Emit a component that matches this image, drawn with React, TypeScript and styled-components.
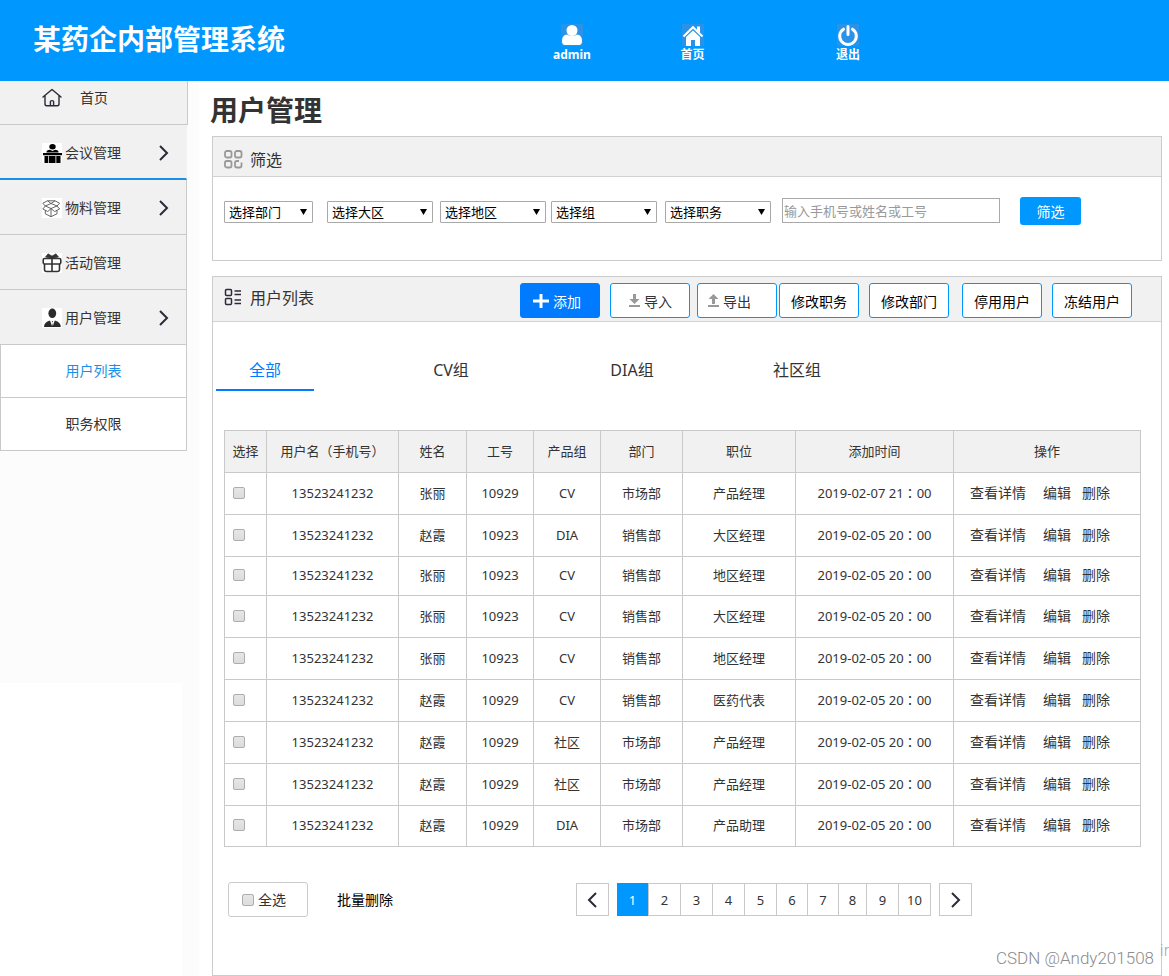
import React from 'react';
import styled, { createGlobalStyle, css } from 'styled-components';

const cjk = '"Noto Sans", "Noto Sans CJK SC", sans-serif';

const GlobalStyle = createGlobalStyle`
  * { box-sizing: border-box; }
  body { margin: 0; background: #fff; color: #333; font: 14px/20px ${cjk}; }
  button, input, select { font-family: inherit; }
  a { color: inherit; text-decoration: none; }
  svg { display: block; flex: none; }
`;

const Page = styled.div`
  position: relative;
  overflow-x: hidden;
`;

/* ---------- top bar ---------- */
const Header = styled.header`
  display: flex;
  height: 81px;
  background: #0097ff;
  color: #fff;
`;
const Brand = styled.div`
  width: 502px;
  padding: 18px 0 0 33px;
  font-size: 28px;
  line-height: 42px;
  font-weight: 700;
`;
const HeaderLink = styled.a<{ $width: number }>`
  display: flex;
  flex-direction: column;
  align-items: center;
  width: ${(p) => p.$width}px;
  padding-top: 24px;
  font-size: 12px;
  line-height: 18px;
  font-weight: 700;
`;
const HeaderIcon = styled.span`
  width: 22px;
  height: 22px;
  background: #2a93e8;
`;

/* ---------- side menu ---------- */
const Body = styled.div`
  display: flex;
`;
const Aside = styled.aside`
  flex: none;
  width: 199px;
  background: linear-gradient(#fff, #fff) 0 602px / 182px 100% no-repeat #fcfcfc;
`;
const MenuItem = styled.a<{ $first?: boolean; $active?: boolean }>`
  display: flex;
  align-items: center;
  width: 187px;
  height: 55px;
  padding: 2px 16px 0 42px;
  background: #f1f1f1;
  border-right: 1px solid #c9c9c9;
  border-bottom: 1px solid #c9c9c9;
  ${(p) => p.$first && css`
    width: 188px;
    height: 44px;
    padding-top: 0;
    padding-bottom: 10px;
  `}
  ${(p) => p.$active && css`
    border-right-color: #f1f1f1;
    border-bottom: 2px solid #1b8fe6;
  `}
`;
const MenuIcon = styled.span<{ $plain?: boolean }>`
  width: 20px;
  height: 20px;
  margin-right: ${(p) => (p.$plain ? 18 : 3)}px;
  background: ${(p) => (p.$plain ? 'none' : '#fff')};
`;
const MenuLabel = styled.span`
  flex: 1;
`;
const SubItem = styled.a<{ $active?: boolean }>`
  display: flex;
  align-items: center;
  justify-content: center;
  width: 187px;
  height: 53px;
  background: #fff;
  border: 1px solid #c9c9c9;
  border-top: 0;
  color: ${(p) => (p.$active ? '#1b8fe6' : '#333')};
`;

/* ---------- panels ---------- */
const Main = styled.main`
  flex: 1;
  min-width: 0;
  padding: 8px 7px 0 13px;
`;
const Title = styled.h1`
  margin: 0 0 5px -2px;
  font-size: 28px;
  line-height: 42px;
  font-weight: 700;
`;
const Panel = styled.section`
  margin-bottom: 15px;
  border: 1px solid #ccc;
  &:last-child { margin-bottom: 0; }
`;
const PanelHead = styled.div<{ $tall?: boolean }>`
  display: flex;
  align-items: center;
  height: ${(p) => (p.$tall ? 45 : 40)}px;
  padding: ${(p) => (p.$tall ? '3px 29px 0 11px' : '6px 29px 0 11px')};
  background: #f1f1f1;
  border-bottom: 1px solid #d2d2d2;
`;
const PanelTitle = styled.h2<{ $raised?: boolean }>`
  display: flex;
  flex: 1;
  align-items: center;
  gap: 7px;
  margin: 0;
  padding-bottom: ${(p) => (p.$raised ? 6 : 0)}px;
  font-size: 16px;
  line-height: 24px;
  font-weight: 400;
`;

/* ---------- filter form ---------- */
const Filters = styled.form`
  display: flex;
  align-items: flex-end;
  height: 83px;
  padding: 0 0 37px 11px;
`;
const SelectBox = styled.div<{ $width: number; $gap: number }>`
  position: relative;
  width: ${(p) => p.$width}px;
  height: 22px;
  margin-left: ${(p) => p.$gap}px;
`;
const Select = styled.select`
  appearance: none;
  width: 100%;
  height: 22px;
  padding: 0 4px;
  border: 1px solid #a9a9a9;
  border-radius: 1px;
  background: #fff;
  color: #000;
  font-size: 13px;
  line-height: 20px;
`;
const SelectArrow = styled.svg`
  position: absolute;
  right: 6px;
  top: 8px;
  pointer-events: none;
`;
const Search = styled.input`
  width: 218px;
  height: 25px;
  margin-left: 11px;
  padding: 0 1px;
  border: 1px solid #a9a9a9;
  font-size: 13px;
  &::placeholder { color: #999; opacity: 1; }
`;
const Submit = styled.button`
  width: 61px;
  height: 28px;
  margin: 0 0 -2px 20px;
  padding: 0;
  border: 0;
  border-radius: 3px;
  background: #0097ff;
  color: #fff;
  font-size: 14px;
`;

/* ---------- toolbar ---------- */
const ToolButton = styled.button<{ $gap: number; $pad?: number; $primary?: boolean }>`
  display: flex;
  align-items: center;
  justify-content: ${(p) => (p.$pad ? 'flex-start' : 'center')};
  gap: 4px;
  width: 80px;
  height: 35px;
  margin-left: ${(p) => p.$gap}px;
  padding: 0 0 0 ${(p) => p.$pad ?? 0}px;
  border: 1px solid ${(p) => (p.$primary ? '#007aff' : '#0097ff')};
  border-radius: 3px;
  background: ${(p) => (p.$primary ? '#007aff' : '#fff')};
  color: ${(p) => (p.$primary ? '#fff' : p.$pad ? '#333' : '#000')};
  font-size: 14px;
`;

/* ---------- tabs ---------- */
const Tabs = styled.div`
  display: flex;
  padding: 28px 0 39px 3px;
`;
const Tab = styled.button<{ $gap: number; $active?: boolean }>`
  width: 98px;
  height: 41px;
  margin-left: ${(p) => p.$gap}px;
  padding: 0 0 2px;
  border: 0;
  border-bottom: 2px solid ${(p) => (p.$active ? '#007aff' : 'transparent')};
  background: none;
  color: ${(p) => (p.$active ? '#007aff' : '#333')};
  font-size: 16px;
`;

/* ---------- table ---------- */
const TableArea = styled.div`
  padding: 0 20px 0 11px;
`;
const Table = styled.table`
  width: 100%;
  table-layout: fixed;
  border-collapse: collapse;
  font-size: 13px;
  th, td {
    padding: 0 0 2px;
    border: 1px solid #c9c9c9;
    text-align: center;
    font-weight: 400;
    white-space: nowrap;
  }
  th { background: #f1f1f1; }
`;
const Row = styled.tr<{ $height?: number }>`
  height: ${(p) => p.$height ?? 42}px;
`;
const Wide = styled.span`
  font-family: "Noto Sans CJK TC", sans-serif;
`;
const Check = styled.input`
  appearance: none;
  display: block;
  width: 12px;
  height: 12px;
  margin: 0;
  border: 1px solid #adadad;
  border-radius: 2px;
  background: linear-gradient(#e6e6e6, #dcdcdc);
  &:checked { background: #0097ff; }
`;
const CheckCell = styled.div`
  padding-left: 8px;
`;
const Actions = styled.div`
  display: flex;
  padding-left: 16px;
  font-size: 14px;
  a:nth-child(2) { margin: 0 11px 0 17px; }
`;

/* ---------- footer ---------- */
const Foot = styled.div`
  display: flex;
  align-items: center;
  padding: 35px 0 58px 15px;
`;
const AllBox = styled.label`
  display: flex;
  align-items: center;
  gap: 4px;
  width: 80px;
  height: 35px;
  padding-left: 13px;
  border: 1px solid #ccc;
  border-radius: 3px;
`;
const PlainButton = styled.button`
  margin-left: 29px;
  padding: 0;
  border: 0;
  background: none;
  color: #000;
  font-size: 14px;
  line-height: 20px;
`;
const Pager = styled.nav`
  display: flex;
  margin-left: 183px;
`;
const Arrow = styled.button`
  display: flex;
  align-items: center;
  justify-content: center;
  width: 33px;
  height: 33px;
  padding: 0;
  border: 1px solid #c9c9c9;
  background: #fff;
`;
const Pages = styled.div`
  display: flex;
  margin: 0 8px;
`;
const PageButton = styled.button<{ $width: number; $active?: boolean }>`
  width: ${(p) => p.$width}px;
  height: 33px;
  padding: 0;
  border: 1px solid #c9c9c9;
  border-left: 0;
  background: #fff;
  color: #333;
  font-size: 13px;
  &:nth-child(2) { border-left: 1px solid #c9c9c9; }
  ${(p) => p.$active && css`
    border: 0;
    background: #0097ff;
    color: #fff;
  `}
`;
const Watermark = styled.div`
  position: absolute;
  right: 15px;
  bottom: 8px;
  color: #8c8c8c;
  font: 300 17px/20px Roboto, sans-serif;
`;
const EdgeMark = styled(Watermark)`
  right: -4px;
  bottom: 16px;
  color: #aaa;
`;

const ink = '#2b2b3a';

const Chevron = ({ left }: { left?: boolean }) => (
  <svg width="12" height="18" viewBox="0 0 12 18" fill="none" stroke={ink} strokeWidth="2">
    <path d={left ? 'M9 2L2 9l7 7' : 'M2 2l7 7-7 7'} />
  </svg>
);

const HomeIcon = () => (
  <svg width="20" height="20" viewBox="0 0 20 20" fill="none" stroke={ink} strokeWidth="1.4" strokeLinejoin="round" strokeLinecap="round">
    <path d="M1 9l9-7.5L19 9M3 7.8V16q0 1.8 1.8 1.8h10.4q1.8 0 1.8-1.8V7.8M8.4 17.6v-4q0-1 1.6-1t1.6 1v4" />
  </svg>
);
const MeetingIcon = () => (
  <svg width="20" height="20" viewBox="0 0 20 20" fill="#000">
    <ellipse cx="10.5" cy="3.8" rx="3.2" ry="2.7" />
    <path d="M4.5 9.5V8.5Q5 7 8 6.7l2.500 1.300 2.500-1.300q3 .3 3.500 1.800v1zM1 10h19v2.300H1zM2.500 13h3.800v7H2.500zM7 13h6.500v7H7zM14.300 13h4.200v7h-4.200z" />
  </svg>
);
const BoxIcon = () => (
  <svg width="20" height="20" viewBox="0 0 20 20" fill="none" stroke="#555" strokeWidth="0.9" strokeLinejoin="round">
    <path d="M9 5.5L5.5 2.8.8 5.2 3.300 8 9 5.500l4-2.700 4.600 2.400L15 8 9 5.500M3.300 8L.8 11l5 2.500L9 10.500 3.300 8M15 8l2.600 3-5 2.500L9 10.500 15 8M3.300 12.300v3.500L9 18.700l6-2.900v-3.500M9 10.500v8.200M5.500 2.800h7.500" />
  </svg>
);
const GiftIcon = () => (
  <svg width="20" height="20" viewBox="0 0 20 20" fill="none" stroke="#333" strokeWidth="1.6">
    <rect x="1.2" y="5.5" width="17.600" height="5.500" rx="1.400" />
    <path d="M2.500 11v5.500q0 2 2 2h11q2 0 2-2V11M10 5.500v13" />
    <path d="M10 5.500L3.500 4 6 .8 10 3l4-2.200L16.500 4z" fill="#333" strokeWidth=".6" />
  </svg>
);
const PersonIcon = () => (
  <svg width="20" height="20" viewBox="0 0 20 20" fill="#2b2b2b">
    <ellipse cx="10.3" cy="5.300" rx="3.900" ry="4.800" />
    <path d="M2 19q0-5 6-6.500l2 5.500.4-3.500-.7-1.500h1.400l-.7 1.500.4 3.500 2-5.500q6 1.500 6 6.500z" />
  </svg>
);

const columns: [React.ReactNode, number][] = [
  ['选择', 42],
  [<>用户名<Wide>（</Wide>手机号<Wide>）</Wide></>, 132],
  ['姓名', 68],
  ['工号', 67],
  ['产品组', 67],
  ['部门', 82],
  ['职位', 113],
  ['添加时间', 158],
  ['操作', 187],
];

const users = [
  ['张丽', '10929', 'CV', '市场部', '产品经理', '2019-02-07 21'],
  ['赵霞', '10923', 'DIA', '销售部', '大区经理', '2019-02-05 20'],
  ['张丽', '10923', 'CV', '销售部', '地区经理', '2019-02-05 20'],
  ['张丽', '10923', 'CV', '销售部', '大区经理', '2019-02-05 20'],
  ['张丽', '10923', 'CV', '销售部', '地区经理', '2019-02-05 20'],
  ['赵霞', '10929', 'CV', '销售部', '医药代表', '2019-02-05 20'],
  ['赵霞', '10929', '社区', '市场部', '产品经理', '2019-02-05 20'],
  ['赵霞', '10929', '社区', '市场部', '产品经理', '2019-02-05 20'],
  ['赵霞', '10929', 'DIA', '市场部', '产品助理', '2019-02-05 20'],
];
const rowHeights = [42, 42, 39, 42, 42, 42, 42, 42, 41];

const filters: [string, number, number][] = [
  ['选择部门', 89, 0],
  ['选择大区', 106, 14],
  ['选择地区', 106, 7],
  ['选择组', 106, 5],
  ['选择职务', 106, 8],
];

const pageWidths = [31, 33, 32, 32, 32, 31, 31, 28, 32, 32];

export default function App() {
  return (
    <Page>
      <GlobalStyle />
      <Header>
        <Brand>某药企内部管理系统</Brand>
        <HeaderLink href="#admin" $width={140}>
          <HeaderIcon>
            <svg width="22" height="22" viewBox="0 0 22 22" fill="#fff">
              <circle cx="11" cy="6.500" r="5.500" />
              <path d="M1 17q0-6 5-6.500 5 3 10 0 5 .5 5 6.500 0 4-3 4H4q-3 0-3-4z" />
            </svg>
          </HeaderIcon>
          admin
        </HeaderLink>
        <HeaderLink href="#home" $width={101}>
          <HeaderIcon>
            <svg width="22" height="22" viewBox="0 0 22 22" fill="#fff">
              <path d="M4 13l7-6.500 7 6.500v9h-5v-6H9v6H4z" />
              <path d="M15 2.500h3V9l-3-3z" />
              <path d="M1.500 12.500L11 3.200l9.500 9.300" fill="none" stroke="#fff" strokeWidth="2" />
            </svg>
          </HeaderIcon>
          首页
        </HeaderLink>
        <HeaderLink href="#exit" $width={210}>
          <HeaderIcon>
            <svg width="22" height="22" viewBox="0 0 22 22" fill="none" stroke="#fff" strokeWidth="3" strokeLinecap="round">
              <path d="M6.500 5.200a8.300 8.300 0 1 0 9 0M11 2.500v8" />
            </svg>
          </HeaderIcon>
          退出
        </HeaderLink>
      </Header>
      <Body>
        <Aside>
          <MenuItem href="#home" $first>
            <MenuIcon $plain><HomeIcon /></MenuIcon>
            <MenuLabel>首页</MenuLabel>
          </MenuItem>
          <MenuItem href="#meeting" $active>
            <MenuIcon><MeetingIcon /></MenuIcon>
            <MenuLabel>会议管理</MenuLabel>
            <Chevron />
          </MenuItem>
          <MenuItem href="#material">
            <MenuIcon><BoxIcon /></MenuIcon>
            <MenuLabel>物料管理</MenuLabel>
            <Chevron />
          </MenuItem>
          <MenuItem href="#activity">
            <MenuIcon><GiftIcon /></MenuIcon>
            <MenuLabel>活动管理</MenuLabel>
          </MenuItem>
          <MenuItem href="#users">
            <MenuIcon><PersonIcon /></MenuIcon>
            <MenuLabel>用户管理</MenuLabel>
            <Chevron />
          </MenuItem>
          <SubItem href="#list" $active>用户列表</SubItem>
          <SubItem href="#roles">职务权限</SubItem>
        </Aside>
        <Main>
          <Title>用户管理</Title>
          <Panel>
            <PanelHead>
              <PanelTitle>
                <svg width="19" height="19" viewBox="0 0 19 19" fill="none" stroke="#999" strokeWidth="1.8">
                  <rect x="1" y="1" width="6.500" height="6.500" rx="1.800" />
                  <rect x="11" y="1" width="6.500" height="6.500" rx="1.800" />
                  <rect x="1" y="11" width="6.500" height="6.500" rx="1.800" />
                  <path d="M15 11h-2q-2 0-2 2v2.500q0 2 2 2h2.500q2 0 2-2v-3" />
                </svg>
                筛选
              </PanelTitle>
            </PanelHead>
            <Filters onSubmit={(e) => e.preventDefault()}>
              {filters.map(([name, width, gap]) => (
                <SelectBox key={name} $width={width} $gap={gap}>
                  <Select aria-label={name}><option>{name}</option></Select>
                  <SelectArrow width="7" height="6" viewBox="0 0 7 6"><path d="M0 0h7L3.500 6z" /></SelectArrow>
                </SelectBox>
              ))}
              <Search aria-label="搜索用户" placeholder="输入手机号或姓名或工号" />
              <Submit type="submit">筛选</Submit>
            </Filters>
          </Panel>
          <Panel>
            <PanelHead $tall>
              <PanelTitle $raised>
                <svg width="19" height="19" viewBox="0 0 19 19" fill="none" stroke={ink} strokeWidth="1.5">
                  <rect x="1.500" y="1.500" width="6" height="6" rx="1" />
                  <rect x="1.500" y="10.500" width="6" height="6" rx="1" />
                  <path d="M10.500 3H17M10.500 6.500H17M10.500 12H17M10.500 15.500H17" />
                </svg>
                用户列表
              </PanelTitle>
              <ToolButton $gap={0} $pad={12} $primary>
                <svg width="16" height="14" viewBox="0 0 16 14" stroke="#fff" strokeWidth="3"><path d="M0 7h16M8 0v14" /></svg>
                添加
              </ToolButton>
              <ToolButton $gap={10} $pad={18}>
                <svg width="11" height="13" viewBox="0 0 11 13" fill="#999"><path d="M4 0h3v5h3.500l-5 5-5-5H4zM0 11h11v2H0z" /></svg>
                导入
              </ToolButton>
              <ToolButton $gap={7} $pad={10}>
                <svg width="11" height="13" viewBox="0 0 11 13" fill="#999"><path d="M4 10h3V5h3.500l-5-5-5 5H4zM0 11h11v2H0z" /></svg>
                导出
              </ToolButton>
              <ToolButton $gap={2}>修改职务</ToolButton>
              <ToolButton $gap={10}>修改部门</ToolButton>
              <ToolButton $gap={13}>停用用户</ToolButton>
              <ToolButton $gap={10}>冻结用户</ToolButton>
            </PanelHead>
            <Tabs role="tablist">
              <Tab role="tab" aria-selected $gap={0} $active>全部</Tab>
              <Tab role="tab" $gap={88}>CV组</Tab>
              <Tab role="tab" $gap={83}>DIA组</Tab>
              <Tab role="tab" $gap={67}>社区组</Tab>
            </Tabs>
            <TableArea>
              <Table>
                <colgroup>{columns.map(([, w], i) => <col key={i} width={w} />)}</colgroup>
                <thead>
                  <Row>{columns.map(([label], i) => <th key={i} scope="col">{label}</th>)}</Row>
                </thead>
                <tbody>
                  {users.map(([name, id, group, dept, job, time], i) => (
                    <Row key={i} $height={rowHeights[i]}>
                      <td><CheckCell><Check type="checkbox" aria-label={`选择${name}`} /></CheckCell></td>
                      <td>13523241232</td>
                      <td>{name}</td>
                      <td>{id}</td>
                      <td>{group}</td>
                      <td>{dept}</td>
                      <td>{job}</td>
                      <td>{time}<Wide>：</Wide>00</td>
                      <td>
                        <Actions>
                          <a href="#view">查看详情</a>
                          <a href="#edit">编辑</a>
                          <a href="#delete">删除</a>
                        </Actions>
                      </td>
                    </Row>
                  ))}
                </tbody>
              </Table>
            </TableArea>
            <Foot>
              <AllBox><Check type="checkbox" />全选</AllBox>
              <PlainButton>批量删除</PlainButton>
              <Pager aria-label="分页">
                <Arrow aria-label="上一页"><Chevron left /></Arrow>
                <Pages>
                  {pageWidths.map((w, i) => (
                    <PageButton key={i} $width={w} $active={i === 0}>{i + 1}</PageButton>
                  ))}
                </Pages>
                <Arrow aria-label="下一页"><Chevron /></Arrow>
              </Pager>
            </Foot>
          </Panel>
        </Main>
      </Body>
      <Watermark>CSDN @Andy201508</Watermark>
      <EdgeMark>in</EdgeMark>
    </Page>
  );
}
